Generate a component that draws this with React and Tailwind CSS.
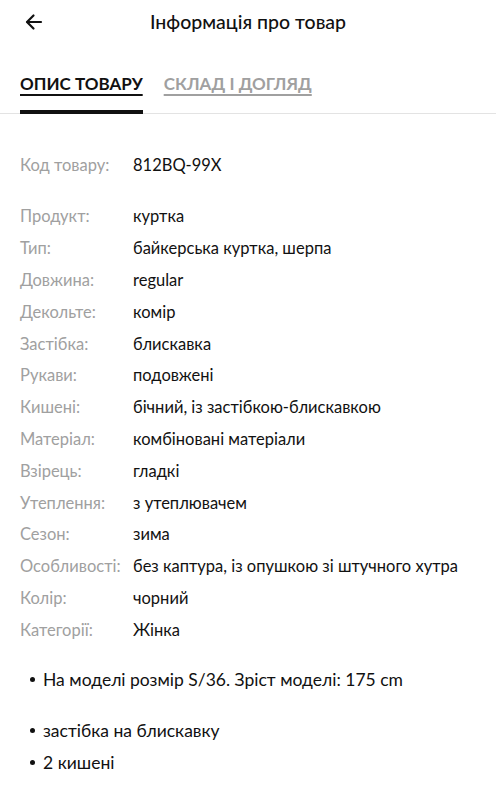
import React from "react";

const rows = [
  ["Продукт:", "куртка"],
  ["Тип:", "байкерська куртка, шерпа"],
  ["Довжина:", "regular"],
  ["Декольте:", "комір"],
  ["Застібка:", "блискавка"],
  ["Рукави:", "подовжені"],
  ["Кишені:", "бічний, із застібкою-блискавкою"],
  ["Матеріал:", "комбіновані матеріали"],
  ["Взірець:", "гладкі"],
  ["Утеплення:", "з утеплювачем"],
  ["Сезон:", "зима"],
  ["Особливості:", "без каптура, із опушкою зі штучного хутра"],
  ["Колір:", "чорний"],
  ["Категорії:", "Жінка"],
];

function Row({ label, value }) {
  return (
    <div className="flex h-[31.8px] items-center text-[16.5px] leading-none">
      <div className="w-[113px] shrink-0 text-[#a0a0a0]">{label}</div>
      <div className="text-[#111]">{value}</div>
    </div>
  );
}

export default function App() {
  return (
    <div
      className="w-[496px] h-[800px] overflow-hidden bg-white text-[#111]"
      style={{ fontFamily: "Lato, 'Noto Sans', sans-serif" }}
    >
      <div className="relative flex h-[44px] items-center justify-center">
        <button className="absolute left-[24px] top-[12px] text-[#111]">
          <svg width="20" height="20" viewBox="0 0 20 20" fill="none" stroke="currentColor" strokeWidth="2.2" strokeLinecap="round" strokeLinejoin="round">
            <path d="M17 10H3.5" />
            <path d="M9.5 3.5L3 10l6.5 6.5" />
          </svg>
        </button>
        <h1 className="text-[19.5px] font-medium leading-none">Інформація про товар</h1>
      </div>
      <div className="mt-[24px] flex gap-[21px] border-b border-[#e3e3e3] px-[20px]">
        <div className="flex flex-col">
          <span className="pb-[10px] text-[17px] font-bold leading-[32px] underline decoration-[2px] underline-offset-[4px]">ОПИС ТОВАРУ</span>
          <div className="h-[4px] -mb-[1px] bg-[#111]" />
        </div>
        <span className="text-[17px] font-bold leading-[32px] text-[#a0a0a0] underline decoration-[2px] underline-offset-[4px]">СКЛАД І ДОГЛЯД</span>
      </div>
      <div className="px-[20px] pt-[35px]">
        <Row label="Код товару:" value="812BQ-99X" />
        <div className="h-[20px]" />
        {rows.map(([l, v]) => (
          <Row key={l} label={l} value={v} />
        ))}
      </div>
      <ul className="mt-[18px] pl-[30px] pr-[20px] text-[17.5px]">
        <li className="flex items-center gap-[8px] h-[32px]">
          <span className="h-[5px] w-[5px] rounded-full bg-[#111]" />
          <span>На моделі розмір S/36. Зріст моделі: 175 cm</span>
        </li>
        <li className="mt-[19px] flex items-center gap-[8px] h-[32px]">
          <span className="h-[5px] w-[5px] rounded-full bg-[#111]" />
          <span>застібка на блискавку</span>
        </li>
        <li className="flex items-center gap-[8px] h-[32px]">
          <span className="h-[5px] w-[5px] rounded-full bg-[#111]" />
          <span>2 кишені</span>
        </li>
      </ul>
    </div>
  );
}
